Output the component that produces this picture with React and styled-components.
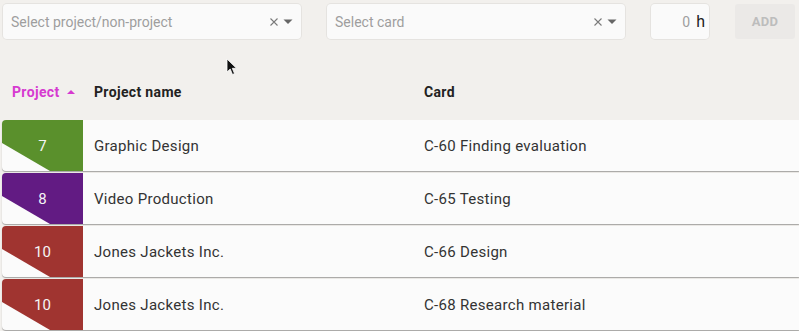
import React from "react";
import styled, { createGlobalStyle } from "styled-components";

const Global = createGlobalStyle`
  html, body {
    margin: 0;
    padding: 0;
    background: #f2f0ed;
    font-family: Roboto, "Liberation Sans", sans-serif;
  }
  * { box-sizing: border-box; }
`;

const Page = styled.div`
  position: relative;
  width: 799px;
  height: 331px;
  overflow: hidden;
  background: #f2f0ed;
`;

const Toolbar = styled.div`
  display: flex;
  gap: 26px;
  padding: 4px 0 0 3px;
  height: 39px;
`;

const Select = styled.div`
  width: 298px;
  height: 35px;
  display: flex;
  align-items: center;
  padding: 0 8px 0 8px;
  background: #fafafa;
  border-radius: 4px;
  box-shadow: 0 0 0 1px rgba(0, 0, 0, 0.05);
`;

const Placeholder = styled.span`
  flex: 1;
  font-size: 14px;
  color: #9e9e9e;
`;

const Icons = styled.span`
  display: flex;
  align-items: center;
  gap: 4px;
`;

const Hours = styled.div`
  width: 58px;
  height: 35px;
  display: flex;
  align-items: center;
  justify-content: flex-end;
  gap: 6px;
  padding-right: 4px;
  background: #fafafa;
  border-radius: 4px;
  box-shadow: 0 0 0 1px rgba(0, 0, 0, 0.05);
`;

const Zero = styled.span`
  font-size: 14px;
  color: #9e9e9e;
`;

const Unit = styled.span`
  font-size: 16px;
  color: #222;
`;

const AddButton = styled.button`
  width: 60px;
  height: 35px;
  border: none;
  border-radius: 3px;
  background: #ebe9e7;
  color: #bdbdbd;
  font-family: inherit;
  font-weight: 700;
  font-size: 13px;
  letter-spacing: 0.3px;
`;

const Grid = styled.div`
  display: grid;
  grid-template-columns: 81px 330px 1fr;
  align-items: center;
`;

const Header = styled(Grid)`
  margin: 41px 0 0 2px;
  height: 24px;
  font-size: 14px;
  font-weight: 700;
  color: #222;
`;

const HeadCell = styled.div`
  padding-left: ${(p) => p.$pad || 11}px;
  color: ${(p) => p.$color || "inherit"};
  display: flex;
  align-items: center;
  gap: 7px;
  letter-spacing: 0.35px;
`;

const SortArrow = styled.span`
  width: 0;
  height: 0;
  border-left: 4px solid transparent;
  border-right: 4px solid transparent;
  border-bottom: 4px solid #d63ad0;
  margin-top: -1px;
`;

const Rows = styled.div`
  display: flex;
  flex-direction: column;
  gap: 2px;
  margin: 16px 0 0 2px;
`;

const Row = styled(Grid)`
  height: 51px;
  background: #fbfbfb;
  border-radius: 4px 0 0 4px;
  box-shadow: 0 1px 1px rgba(0, 0, 0, 0.32);
  font-size: 15px;
  color: #333;
  overflow: hidden;
`;

const Badge = styled.div`
  height: 100%;
  display: flex;
  align-items: center;
  justify-content: center;
  background: ${(p) => p.$color};
  color: #f5f5f5;
  font-size: 15px;
  clip-path: polygon(0 0, 100% 0, 100% 100%, 48px 100%, 0 45%);
`;

const Cell = styled.div`
  padding-left: 11px;
  letter-spacing: 0.3px;
`;

const Cursor = styled.svg`
  position: absolute;
  left: 226px;
  top: 58px;
`;

const rows = [
  { id: 7, color: "#5a902c", name: "Graphic Design", card: "C-60 Finding evaluation" },
  { id: 8, color: "#621b83", name: "Video Production", card: "C-65 Testing" },
  { id: 10, color: "#a03430", name: "Jones Jackets Inc.", card: "C-66 Design" },
  { id: 10, color: "#a03430", name: "Jones Jackets Inc.", card: "C-68 Research material" },
];

function SelectIcons() {
  return (
    <Icons>
      <svg width="10" height="10" viewBox="0 0 10 10">
        <path d="M1.5 1.5L8.5 8.5M8.5 1.5L1.5 8.5" stroke="#7a7a7a" strokeWidth="1.1" />
      </svg>
      <svg width="10" height="6" viewBox="0 0 10 6">
        <path d="M0.5 0.5H9.5L5 5Z" fill="#666" />
      </svg>
    </Icons>
  );
}

export default function App() {
  return (
    <Page>
      <Global />
      <Toolbar>
        <Select>
          <Placeholder>Select project/non-project</Placeholder>
          <SelectIcons />
        </Select>
        <Select>
          <Placeholder>Select card</Placeholder>
          <SelectIcons />
        </Select>
        <Hours>
          <Zero>0</Zero>
          <Unit>h</Unit>
        </Hours>
        <AddButton>ADD</AddButton>
      </Toolbar>

      <Header>
        <HeadCell $pad={10} $color="#d63ad0">
          Project <SortArrow />
        </HeadCell>
        <HeadCell>Project name</HeadCell>
        <HeadCell>Card</HeadCell>
      </Header>

      <Rows>
        {rows.map((r, i) => (
          <Row key={i}>
            <Badge $color={r.color}>{r.id}</Badge>
            <Cell>{r.name}</Cell>
            <Cell>{r.card}</Cell>
          </Row>
        ))}
      </Rows>

      <Cursor width="12" height="18" viewBox="0 0 12 18">
        <path d="M1 1V14L4.2 11L6.5 16.5L8.5 15.6L6.3 10.3H10.5Z" fill="#111" stroke="#fff" strokeWidth="0.8" />
      </Cursor>
    </Page>
  );
}
